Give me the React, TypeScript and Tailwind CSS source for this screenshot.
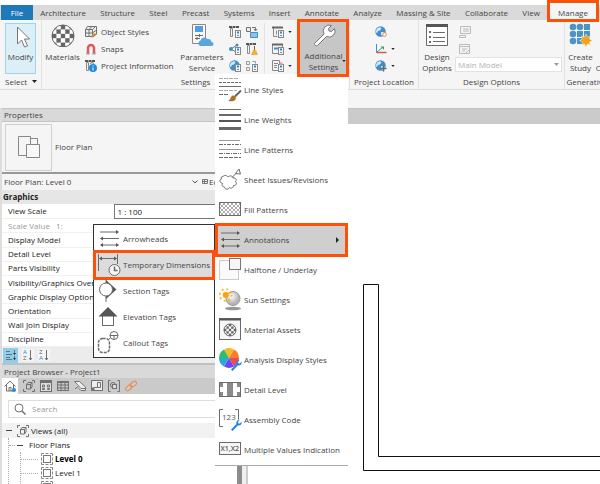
import React from 'react';

interface IconProps {
  children: React.ReactNode;
}

// 12px glyphs used in the small ribbon buttons and the browser toolbar
const Icon12: React.FC<IconProps> = ({ children }) => (
  <svg width="12" height="12" viewBox="0 0 12 12" fill="none" stroke="#707070" className="shrink-0" aria-hidden="true">
    {children}
  </svg>
);

// 24px glyphs used in the big ribbon buttons and the menus
const Icon24: React.FC<IconProps> = ({ children }) => (
  <svg width="24" height="24" viewBox="0 0 24 24" fill="none" stroke="#6b6b6b" className="shrink-0" aria-hidden="true">
    {children}
  </svg>
);

const Caret = ({ className }: { className: string }) => (
  <svg viewBox="0 0 5 3" className={`shrink-0 ${className}`} aria-hidden="true">
    <path d="M0 0h5L2.5 3z" fill="currentColor" />
  </svg>
);

// Orange frame that marks the controls of the current step
const Highlight = ({ className }: { className: string }) => (
  <span className={`pointer-events-none absolute border-3 border-[#ff5008] ${className}`} />
);

const CheckerBall = ({ cx, cy, r }: { cx: number; cy: number; r: number }) => {
  const s = (r * 2) / 5;
  const id = `ball-${r}`;
  const cells = [];
  for (let row = 0; row < 5; row++) {
    for (let col = 0; col < 5; col++) {
      if ((row + col) % 2 === 0) {
        cells.push(<rect key={`${row}-${col}`} x={cx - r + col * s} y={cy - r + row * s} width={s} height={s} />);
      }
    }
  }
  return (
    <g>
      <clipPath id={id}>
        <circle cx={cx} cy={cy} r={r} />
      </clipPath>
      <circle cx={cx} cy={cy} r={r} fill="#fff" stroke="none" />
      <g clipPath={`url(#${id})`} fill="#666" stroke="none">{cells}</g>
      <circle cx={cx} cy={cy} r={r} stroke="#666" />
    </g>
  );
};

const Wrench = () => (
  <g stroke="none" fill="#1e88e5">
    <path d="M13 21.5l5.5-5.500c-.8-2 .7-4.500 3.200-4.300l-1.700 2 .3 1.500 1.500.3 1.900-1.800c.6 2.500-1.700 4.400-3.900 3.700L14.500 23z" />
  </g>
);

const ArrowLines = () => (
  <g>
    <path d="M3 5h17M4 11.5h18M4 18h17" stroke="#6b6b6b" />
    <path d="M19 3l3 2-3 2zM6 9.500l-3 2 3 2zM6 16l-3 2 3 2zM19 16l3 2-3 2z" fill="#555" stroke="none" />
  </g>
);

const Globe = () => (
  <g stroke="none">
    <circle cx="5.5" cy="5.5" r="5.2" fill="#3f8fcb" />
    <path d="M2 2.500l3-1.500 1.500 1.500-1.500 2-2 .5-1 2-1.500-1zM6 6l3 0 1 2-2 2-2-1z" fill="#d3e6f3" />
  </g>
);

const menuItems = [
  {
    label: 'Line Styles',
    icon: (
      <>
        <path d="M1 .5h20M1 12.5h18" strokeDasharray="4 1" stroke="#aaa" />
        <path d="M1 4.5h22" strokeDasharray="3 1" />
        <path d="M1 8.5h22" />
        <path d="M1 16.5h10" strokeDasharray="4 1" />
        <path d="M23 12.500l-6 6" stroke="#666" strokeWidth="2" />
        <path d="M10 23c3-1 2-5 5-5.500 3 0 4 3 1.500 5-2 1-4 1-6.500.5z" fill="#a9712d" stroke="none" />
      </>
    ),
  },
  {
    label: 'Line Weights',
    icon: (
      <>
        <path d="M1 1.5h22" />
        <path d="M1 7h22" strokeWidth="2" />
        <path d="M1 13h22" strokeWidth="2" stroke="#555" />
        <path d="M1 20.5h22" strokeWidth="3" stroke="#666" />
      </>
    ),
  },
  {
    label: 'Line Patterns',
    icon: (
      <>
        <path d="M1 2.5h21M1 11.5h22" stroke="#999" />
        <path d="M1 6.5h22" strokeDasharray="4 1 2 1" />
        <path d="M1 15.5h22" strokeDasharray="4 1 1 1" />
        <path d="M1 19.5h22" strokeDasharray="4 1" />
      </>
    ),
  },
  {
    label: 'Sheet Issues/Revisions',
    icon: (
      <>
        <path d="M5 8.500c2-2 4-1 5 .5 2-2 5-1 5 1 3-.5 4 2 2.500 3.500 2 2 0 4.500-2 4 0 2.500-3 3.500-4 2-2 3-5 1.500-5-.5-2 0-3-2-2-3.500-3-1-3.500-4-1-4.500-1-1.500 0-2.500 1.500-2.500z" />
        <path d="M14 9.500l4-4M17.500 5.500l3.500-4.500 1.500 5z" />
      </>
    ),
  },
  {
    label: 'Fill Patterns',
    icon: (
      <>
        <defs>
          <pattern id="hatch" width="4" height="4" patternUnits="userSpaceOnUse">
            <path d="M0 0l4 4M4 0L0 4" stroke="#999" strokeWidth=".8" />
          </pattern>
        </defs>
        <rect x="1.5" y="4.5" width="21" height="13" fill="url(#hatch)" />
      </>
    ),
  },
  { label: 'Annotations', icon: <ArrowLines /> },
  {
    label: 'Halftone / Underlay',
    icon: (
      <>
        <rect x="1.5" y="2.5" width="19" height="19" fill="#fafafa" stroke="#ccc" />
        <rect x="11.5" y=".5" width="11" height="11" fill="#f5f5f5" stroke="#777" />
      </>
    ),
  },
  {
    label: 'Sun Settings',
    icon: (
      <>
        <defs>
          <radialGradient id="sphere" cx=".4" cy=".35">
            <stop offset="0" stopColor="#fff" />
            <stop offset="1" stopColor="#b5b5b5" />
          </radialGradient>
        </defs>
        <ellipse cx="15" cy="20.5" rx="8" ry="1.8" fill="#999" stroke="none" />
        <circle cx="15" cy="10.5" r="7" fill="url(#sphere)" stroke="#999" />
        <circle cx="7.7" cy="7" r="6" stroke="#fdb515" strokeWidth="1.8" strokeDasharray="1.8 2.9" />
        <circle cx="7.7" cy="7" r="3" fill="#fba40a" stroke="none" />
      </>
    ),
  },
  {
    label: 'Material Assets',
    icon: (
      <>
        <rect x="1.5" y=".5" width="21" height="21" fill="#f7f7f7" />
        <path d="M1 1.5h22" strokeWidth="2" stroke="#555" />
        <CheckerBall cx={12} cy={12} r={6} />
      </>
    ),
  },
  {
    label: 'Analysis Display Styles',
    icon: (
      <>
        <g stroke="none">
          <path d="M11 10L6 1.400A10 10 0 0 1 16 1.400z" fill="#fbb928" />
          <path d="M11 10L16 1.400A10 10 0 0 1 21 10z" fill="#fa7d2c" />
          <path d="M11 10H21A10 10 0 0 1 16 18.600z" fill="#ee4a55" />
          <path d="M11 10L16 18.600A10 10 0 0 1 6 18.600z" fill="#7044f0" />
          <path d="M11 10L6 18.600A10 10 0 0 1 1 10z" fill="#2aa8d8" />
          <path d="M11 10H1A10 10 0 0 1 6 1.400z" fill="#2ebd6b" />
        </g>
        <Wrench />
      </>
    ),
  },
  {
    label: 'Detail Level',
    icon: (
      <>
        <rect x="1.5" y="4.5" width="21" height="14" fill="#fff" />
        <path d="M2 5h3v4H2zM9 5h6v4H9zM19 5h3v4h-3zM5 9h4v5H5zM9 9h6v5H9zM15 9h4v5h-4zM2 14h3v4H2zM9 14h6v4H9zM19 14h3v4h-3z" fill="#8a8a8a" stroke="none" />
        <path d="M5 9h4v5H5zM15 9h4v5h-4z" fill="#fff" stroke="none" />
      </>
    ),
  },
  {
    label: 'Assembly Code',
    icon: (
      <>
        <path d="M5 1.500H1.500v17H5M17 1.500h3.500v10" />
        <text x="4" y="12" fontSize="8" fill="#555" stroke="none">123</text>
        <Wrench />
      </>
    ),
  },
  {
    label: 'Multiple Values Indication',
    icon: (
      <>
        <rect x="1.5" y="4.5" width="21" height="12" fill="#f7f7f7" />
        <text x="2.5" y="13" fontSize="7" fontWeight="600" fill="#555" stroke="none">X1,X2</text>
      </>
    ),
  },
];

const submenuItems = [
  { label: 'Arrowheads', icon: <ArrowLines /> },
  {
    label: 'Temporary Dimensions',
    icon: (
      <>
        <path d="M1.500 1v17M20.500 1v10M3 5.500h16" />
        <path d="M5 3.500l-3 2 3 2zM17 3.500l3 2-3 2z" fill="#555" stroke="none" />
        <circle cx="17.5" cy="17" r="5.5" fill="#f5f5f5" />
        <path d="M17.500 13.500v4h3" strokeWidth="1.5" />
      </>
    ),
  },
  {
    label: 'Section Tags',
    icon: (
      <>
        <path d="M9 1l10.500 9.500L9 20z" fill="#555" stroke="none" />
        <circle cx="9" cy="10.5" r="6.5" fill="#fff" />
        <path d="M9 0v4M9 17v6" />
      </>
    ),
  },
  {
    label: 'Elevation Tags',
    icon: (
      <>
        <rect x="5.5" y="9.5" width="11" height="11" fill="#fff" />
        <path d="M11 2l9.500 9.500H1.500z" fill="#555" stroke="none" />
      </>
    ),
  },
  {
    label: 'Callout Tags',
    icon: (
      <>
        <rect x="1.5" y="7.5" width="11" height="14" rx="4" strokeDasharray="3 1" strokeWidth="1.5" />
        <circle cx="17" cy="4.5" r="4" />
        <path d="M13 4.500h8M17 4.500v4M13 7l-2 2" />
      </>
    ),
  },
];

const properties = [
  ['View Scale', '1 : 100'],
  ['Scale Value   1:', '100'],
  ['Display Model', ''],
  ['Detail Level', ''],
  ['Parts Visibility', ''],
  ['Visibility/Graphics Over', ''],
  ['Graphic Display Option', ''],
  ['Orientation', ''],
  ['Wall Join Display', ''],
  ['Discipline', ''],
];

const tabs = [
  'Architecture',
  'Structure',
  'Steel',
  'Precast',
  'Systems',
  'Insert',
  'Annotate',
  'Analyze',
  'Massing & Site',
  'Collaborate',
  'View',
];

const ViewIcon = () => (
  <Icon12>
    <path d="M.5 3V.5H3M9 .5h2.500V3M11.500 9v2.500H9M3 11.500H.5V9" />
    <path d="M3.500 4.500h4v4.500h-4zM3.500 4.500L5 2.500h4L7.500 4.500M9 2.500V7L7.500 9" />
  </Icon12>
);

const LevelIcon = () => (
  <Icon12>
    <rect x="2.5" y="2.5" width="7" height="7" fill="#fff" stroke="#777" />
    <path d="M.5 3V.5H3M4.500.5h3M9 .5h2.500V3M11.500 4.500v3M11.500 9v2.500H9M7.500 11.500h-3M3 11.500H.5V9M.5 7.500v-3" stroke="#888" />
  </Icon12>
);

const browserTabs = [
  { label: 'Views', icon: <ViewIcon /> },
  {
    label: 'Legends',
    icon: (
      <Icon12>
        <rect x=".5" y=".5" width="11" height="11" fill="#ddd" />
        <path d="M1 2h10" strokeWidth="2" />
        <path d="M2.500 5h2v2h-2zM7.500 5h2v2h-2zM2.500 8.500h2v1h-2zM7.500 8.500h2v1h-2z" />
      </Icon12>
    ),
  },
  {
    label: 'Schedules',
    icon: (
      <Icon12>
        <path d="M.5 1.500h11v9H.5zM.5 5h11M.5 8h11M4 2v8M8 2v8" />
        <path d="M.5 2h11" strokeWidth="2" />
      </Icon12>
    ),
  },
  {
    label: 'Sheets',
    icon: (
      <Icon12>
        <path d="M.5 1.500h5l6 5.500v3.500H7L4 7.500" fill="#eee" />
        <path d="M.5 1.500L7 8.500h4M1 9l3.500-3" />
      </Icon12>
    ),
  },
  {
    label: 'Families',
    icon: (
      <Icon12>
        <path d="M.5.5h11v10H.5z" fill="#eee" />
        <path d="M3 7.500h3.500v-5M6.500 2.500h3v5h-3" />
        <path d="M1 8h2v2H1z" fill="#777" />
      </Icon12>
    ),
  },
  {
    label: 'Groups',
    icon: (
      <Icon12>
        <path d="M2.500.5H.5v11h2M9.500.5h2v11h-2" />
        <circle cx="5" cy="5" r="2.5" />
        <rect x="4.5" y="4.5" width="4" height="4" fill="#ddd" />
      </Icon12>
    ),
  },
  {
    label: 'Links',
    icon: (
      <Icon12>
        <g stroke="#f0894d" transform="rotate(-40 6 6)">
          <rect x="-.5" y="4" width="7" height="4" rx="2" />
          <rect x="5.500" y="4" width="7" height="4" rx="2" />
        </g>
      </Icon12>
    ),
  },
];

const RibbonPanel = ({ label, className, children }: { label: string; className: string; children: React.ReactNode }) => (
  <section className={`flex shrink-0 flex-col border-r border-[#e2e2e2] ${className}`}>
    <div className="flex h-[54px] pt-[3px]">{children}</div>
    <div className="h-[15px] text-center leading-[15px] whitespace-nowrap">{label}</div>
  </section>
);

const BigButton = ({ icon, lines, className }: { icon: React.ReactNode; lines: string[]; className: string }) => (
  <button className={`flex shrink-0 flex-col items-center ${className}`}>
    <Icon24>{icon}</Icon24>
    <span className="mt-1 block leading-[11px] whitespace-nowrap">
      {lines.map(line => (
        <span key={line} className="block">{line}</span>
      ))}
    </span>
  </button>
);

const SmallButton = ({ label, caret, children }: { label: string; caret?: boolean; children: React.ReactNode }) => (
  <button aria-label={label} className="flex h-[17px] items-center gap-1">
    <Icon12>{children}</Icon12>
    {caret && <Caret className="h-[2px] w-1 text-[#222]" />}
  </button>
);

// Small calculator shape shared by the settings buttons
const Calc = () => (
  <g>
    <rect x="6.500" y="4.500" width="5" height="7" fill="#f5f5f5" stroke="#888" />
    <path d="M8 6.500h2" stroke="#1e88e5" strokeWidth="2" />
    <path d="M8 9.500h2" stroke="#888" />
  </g>
);

// Column with a hatched cap, the "parameter" part of a glyph
const Column = () => (
  <g>
    <path d="M1.500 2.500h2v8h-2z" fill="#f5f5f5" stroke="#888" />
    <path d="M0 1h10" stroke="#555" strokeWidth="2" strokeDasharray="3 .5" />
  </g>
);

const MainMenu = () => (
  <div role="menu" className="absolute top-full right-0 w-[133px] border-b border-[#aaa] bg-white pt-px">
    {menuItems.map(item => (
      <button
        key={item.label}
        role="menuitem"
        className={`relative flex h-[30px] w-full items-center gap-[2px] pl-[3px] whitespace-nowrap ${item.label === 'Annotations' ? 'bg-[#cfcfcf]' : ''}`}
      >
        <Icon24>{item.icon}</Icon24>
        {item.label}
        {item.label === 'Annotations' && (
          <>
            <svg width="3" height="6" viewBox="0 0 3 6" className="mr-[9px] ml-auto" aria-hidden="true">
              <path d="M0 0l3 3-3 3z" fill="#222" />
            </svg>
            <Highlight className="-inset-y-[2px] inset-x-0" />
          </>
        )}
      </button>
    ))}
    <div role="menu" className="absolute top-[150px] right-full w-[122px] border border-[#333] bg-white py-px">
      {submenuItems.map(item => (
        <button
          key={item.label}
          role="menuitem"
          className={`relative flex h-[26px] w-full items-center gap-[2px] pl-[3px] whitespace-nowrap ${item.label === 'Temporary Dimensions' ? 'bg-[#dcdcdc]' : ''}`}
        >
          <Icon24>{item.icon}</Icon24>
          {item.label}
          {item.label === 'Temporary Dimensions' && <Highlight className="-inset-y-[2px] -inset-x-px" />}
        </button>
      ))}
    </div>
  </div>
);

const Ribbon = () => (
  <div className="flex h-[70px] shrink-0 border-b border-[#dedede] bg-[#f5f5f5]">
    <section className="w-[42px] shrink-0 border-r border-[#e2e2e2] pt-[3px] pl-[5px]">
      <button className="flex h-[51px] w-[31px] flex-col items-center border border-[#9ed3ea] bg-[#dceef6] pt-px">
        <Icon24>
          <path d="M8.500 2v17l4-4 3 7 3-1-3-7h5z" fill="#fff" stroke="#777" />
        </Icon24>
        <span className="mt-[2px] leading-[11px]">Modify</span>
      </button>
      <button className="flex h-[15px] items-center gap-[5px]">
        Select
        <Caret className="h-[3px] w-[5px] text-[#222]" />
      </button>
    </section>

    <RibbonPanel label="Settings" className="w-[308px]">
      <BigButton className="w-[41px]" lines={['Materials']} icon={<CheckerBall cx={12} cy={13} r={11} />} />
      <div className="flex w-[98px] flex-col pl-[2px]">
        <button className="flex h-[17px] items-center gap-1 whitespace-nowrap">
          <Icon12>
            <path d="M.5 3.500h7v7h-7zM.5 3.500l2-3h9v8M4 3.500v7M.5 7h7M7.500 3.500l3-3M4 3.500l3-3M7.500 7l4-3" fill="#eee" />
            <path d="M6 11.500l1-3 3-1.500 1.500 1.500-2.500 2.500z" fill="#c58a3c" stroke="none" />
          </Icon12>
          Object Styles
        </button>
        <button className="flex h-[17px] items-center gap-1 whitespace-nowrap">
          <Icon12>
            <path d="M3 11V5a3 3 0 0 1 6 0v6" stroke="#dc5a5a" strokeWidth="2.5" />
            <path d="M1.500 10.500h3M7.500 10.500h3" stroke="#999" strokeWidth="2" />
          </Icon12>
          Snaps
        </button>
        <button className="flex h-[17px] items-center gap-1 whitespace-nowrap">
          <Icon12>
            <Column />
            <path d="M5 3.500l2-1 2 1" />
            <circle cx="8" cy="8" r="4" fill="#1e88e5" stroke="none" />
            <path d="M8 7.500v3M8 5.500v1" stroke="#fff" />
          </Icon12>
          Project Information
        </button>
      </div>
      <BigButton
        className="w-[42px]"
        lines={['Parameters', 'Service']}
        icon={
          <>
            <path d="M2.500 1.500h13v19h-13z" fill="#f8f8f8" stroke="#888" />
            <path d="M5 3h8v6H5z" fill="#4f9fe0" stroke="none" />
            <path d="M5 12.500h8M5 15.500h5M9.500 11v3M7 14v3" />
            <path d="M10 23a3 3 0 0 1 .5-5.500 4 4 0 0 1 7-1.500 3.500 3.500 0 0 1 4 3 2 2 0 0 1 0 4z" fill="#5aa5de" stroke="none" />
          </>
        }
      />
      <div className="flex w-[41px] gap-[5px] pl-[6px]">
        <div className="flex flex-col">
          <SmallButton label="Project Parameters">
            <Column />
            <Calc />
          </SmallButton>
          <SmallButton label="Shared Parameters">
            <path d="M2 6l6-4M2 6l5 3" />
            <circle cx="2" cy="6" r="2" fill="#3f8fcb" stroke="none" />
            <circle cx="8" cy="2" r="1.5" fill="#3f8fcb" stroke="none" />
            <Calc />
          </SmallButton>
          <SmallButton label="Global Parameters">
            <Globe />
            <Calc />
          </SmallButton>
        </div>
        <div className="flex flex-col">
          <SmallButton label="Transfer Project Standards">
            <path d="M.5 1.500h4v4h-4z" fill="#eee" />
            <path d="M6 1.500h3.500V4M8 3l1.500 2L11 3" />
            <path d="M4.500 6.500h7v5h-7z" fill="#8cc3ea" stroke="#3f8fcb" />
          </SmallButton>
          <SmallButton label="Purge Unused">
            <Column />
            <path d="M8.500 3v4" stroke="#8a5a2a" />
            <path d="M7 7h3l2 5H5z" fill="#f0b040" stroke="none" />
          </SmallButton>
          <SmallButton label="Project Units">
            <path d="M.5 1.500h3v3h-3zM6.500 1.500h3v2M.5 7.500h3v3h-3z" stroke="#999" />
            <Calc />
          </SmallButton>
        </div>
      </div>
      <div className="flex w-[34px] flex-col border-l border-[#e2e2e2] pl-[7px]">
        <SmallButton label="Structural Settings" caret>
          <path d="M1.500 2v8.500h4M4.500 4.500v4" stroke="#888" />
          <path d="M0 1.500h11" stroke="#666" strokeWidth="2" />
          <Calc />
        </SmallButton>
        <SmallButton label="MEP Settings" caret>
          <path d="M.5 1.500h10v9H.5z" stroke="#888" />
          <path d="M0 1.500h11" stroke="#666" strokeWidth="2" />
          <path d="M2 5.500h4" stroke="#3f8fcb" strokeWidth="2" />
          <Calc />
        </SmallButton>
        <SmallButton label="Panel Schedule Templates" caret>
          <path d="M.5.5h7v10h-7zM2 3.500h4M2 5.500h3M2 7.500h3" stroke="#888" />
          <Calc />
          <circle cx="9" cy="3.5" r="1.5" fill="#e8a0a8" stroke="none" />
        </SmallButton>
      </div>
      <div className="relative -mt-px h-[52px] w-[50px] shrink-0 pl-px">
        <button className="flex h-full w-full flex-col items-center bg-[#c6c6c6] pt-px">
          <Icon24>
            <path d="M2.500 20.500L12 11a6 6 0 0 1 7.500-8.500l-3 3 .5 2.500 2.500.5 3-3A6 6 0 0 1 14.500 13.500L5.500 22.500a2 2 0 0 1-3-2z" fill="#fff" stroke="#777" />
          </Icon24>
          <span className="mt-[3px] block leading-[11px]">
            <span className="block">Additional</span>
            <span className="block">Settings</span>
          </span>
        </button>
        <Caret className="absolute right-[2px] bottom-[12px] h-[2px] w-1 text-[#222]" />
        <MainMenu />
        <Highlight className="-inset-y-[3px] -inset-x-px" />
      </div>
    </RibbonPanel>

    <RibbonPanel label="Project Location" className="w-[69px]">
      <div className="flex flex-col pl-[25px]">
        <SmallButton label="Location">
          <Globe />
          <circle cx="9.500" cy="8.500" r="1.800" stroke="#e8823a" fill="#fff" />
        </SmallButton>
        <SmallButton label="Coordinates" caret>
          <path d="M1.500 1v8.500" stroke="#3f8fcb" />
          <path d="M1.500 9.500h10" stroke="#d9534f" strokeWidth="1.5" />
          <path d="M2 9l6-5" stroke="#3aa86a" />
          <path d="M5.500 3.500H9V7z" fill="#3aa86a" stroke="none" />
        </SmallButton>
        <SmallButton label="Position" caret>
          <Globe />
          <path d="M8.500 5.500v6M5.500 8.500h6" stroke="#666" strokeWidth="1.5" />
        </SmallButton>
      </div>
    </RibbonPanel>

    <RibbonPanel label="Design Options" className="w-[146px]">
      <BigButton
        className="w-[36px]"
        lines={['Design', 'Options']}
        icon={
          <>
            <path d="M1.500 1.500h21v21h-21z" fill="#fff" />
            <path d="M1 2.500h22" strokeWidth="3" stroke="#555" />
            <path d="M4 9h2M4 14h2M4 19h2" strokeWidth="2" />
            <path d="M8 9.500h12M8 14.500h12M8 18.500h12" />
          </>
        }
      />
      <div className="flex min-w-0 flex-1 flex-col pr-[2px]">
        <div className="flex flex-col pl-1">
          <SmallButton label="Add to Set">
            <path d="M1.500.5h10v7h-10zM4 3h6M4 5h6M.5 9.500h6v2h-6z" stroke="#bbb" />
          </SmallButton>
          <SmallButton label="Pick to Edit">
            <path d="M.5 1.500h10v9H.5zM.5 3.500h10M3 6h5M3 8h3M7 10l4-4" stroke="#bbb" />
          </SmallButton>
        </div>
        <div className="relative">
          <select aria-label="Active design option" disabled className="block h-[15px] w-full appearance-none border border-[#e2e2e2] bg-white px-[2px] text-[8px] text-[#b0b0b0] opacity-100">
            <option>Main Model</option>
          </select>
          <Caret className="absolute top-[6px] right-[3px] h-[3px] w-[5px] text-[#999]" />
        </div>
      </div>
    </RibbonPanel>

    <RibbonPanel label="Generative Design" className="w-[72px]">
      <BigButton
        className="w-[31px]"
        lines={['Create', 'Study']}
        icon={
          <>
            <g fill="#4d93c4" stroke="none">
              <circle cx="4" cy="4" r="3.3" />
              <circle cx="11" cy="4" r="3.3" />
              <rect x="15" y="1" width="6" height="6" />
              <circle cx="4" cy="11" r="3.3" />
              <rect x="8" y="8" width="6" height="6" />
              <rect x="15" y="8" width="6" height="6" />
              <circle cx="4" cy="18" r="3.3" />
              <rect x="8" y="15" width="6" height="6" />
            </g>
            <path d="M17 11l1.500 3 3-1-1 3 3 1.500-3 1.500 1 3-3-1-1.500 3-1.500-3-3 1 1-3-3-1.500 3-1.500-1-3 3 1z" fill="#f5a21b" stroke="#f5f5f5" strokeWidth=".5" />
          </>
        }
      />
      <BigButton className="w-[38px]" lines={['Explore', 'Outcomes']} icon={<path d="M8 2h14v20H8z" />} />
    </RibbonPanel>
  </div>
);

const PropertiesPalette = () => (
  <section className="shrink-0">
    <h2 className="h-[14px] border-y border-[#c4c4c4] bg-[#d9d9d9] pl-[2px] leading-[12px]">Properties</h2>
    <div className="flex h-[52px] items-center gap-[3px] border-b-2 border-[#999] pl-[3px]">
      <div className="flex size-[47px] items-center justify-center border border-[#d0d0d0]">
        <svg width="24" height="24" viewBox="0 0 24 24" fill="none" stroke="#888" aria-hidden="true">
          <path d="M13.500 1.500h-12v19h8M13.500 3.500h7v6M13.500 1.500v8" />
          <path d="M9.500 9.500h13v13h-13z" fill="#f8f8f8" />
        </svg>
      </div>
      Floor Plan
    </div>
    <div className="flex h-[16px] items-center pr-[10px] pl-[2px]">
      Floor Plan: Level 0
      <svg width="6" height="4" viewBox="0 0 6 4" fill="none" stroke="#555" className="mr-1 ml-auto" aria-hidden="true">
        <path d="M.5.5L3 3 5.500.5" />
      </svg>
      <button className="flex w-[25px] items-center gap-[1px] overflow-hidden whitespace-nowrap">
        <svg width="6" height="6" viewBox="0 0 6 6" fill="none" stroke="#777" className="shrink-0" aria-hidden="true">
          <path d="M.5.5h5v4h-5zM2.500.5v4M.5 2.500h5" />
        </svg>
        Edit
      </button>
    </div>
    <h3 className="h-[14px] bg-[#e6e6e6] pl-px leading-[14px] font-bold text-[#222]">Graphics</h3>
    <table className="h-[143px] w-full table-fixed border-collapse bg-white">
      <tbody>
        {properties.map(([name, value], i) => (
          <tr key={name} className={`border-b border-[#f0f0f0] ${i === 1 ? 'text-[#999]' : 'text-[#222]'}`}>
            <th scope="row" className="w-[112px] p-0 pl-[6px] text-left leading-[12px] font-normal whitespace-pre">{name}</th>
            <td className={`p-0 leading-[12px] whitespace-nowrap ${i === 0 ? 'border border-[#777] pl-[3px]' : 'pl-[2px]'}`}>{value}</td>
          </tr>
        ))}
      </tbody>
    </table>
    <div className="flex h-4 items-center gap-1 bg-[#ececec] px-px">
      <button aria-label="Group by category" className="flex h-[15px] w-[15px] items-center justify-center bg-[#8fcdec]">
        <Icon12>
          <path d="M1 2.500h4M1 5.500h6M1 8.500h4M1 10.500h6M9.500 1v4M9.500 7v4" />
          <path d="M8 4l1.500 2L11 4zM8 9l1.500 2L11 9z" fill="#333" stroke="none" />
        </Icon12>
      </button>
      <button aria-label="Sort ascending" className="bg-[#f5f5f5]">
        <Icon12>
          <text x="1" y="5" fontSize="6" fill="#1e88e5" stroke="none">A</text>
          <text x="1" y="11" fontSize="6" fill="#555" stroke="none">Z</text>
          <path d="M8.500 1v10M7 9l1.500 2L10 9" />
        </Icon12>
      </button>
      <button aria-label="Sort descending" className="bg-[#f5f5f5]">
        <Icon12>
          <text x="1" y="5" fontSize="6" fill="#555" stroke="none">Z</text>
          <text x="1" y="11" fontSize="6" fill="#1e88e5" stroke="none">A</text>
          <path d="M8.500 1v10M7 9l1.500 2L10 9" />
        </Icon12>
      </button>
    </div>
  </section>
);

const ProjectBrowser = () => (
  <section className="flex min-h-0 flex-1 flex-col overflow-hidden bg-white">
    <h2 className="h-[15px] shrink-0 border-t-2 border-[#c0c0c0] bg-[#d9d9d9] pl-[2px] leading-[13px]">Project Browser - Project1</h2>
    <div className="flex h-4 shrink-0 items-center gap-[5px] bg-[#cacaca]">
      <button aria-label="Home" className="flex h-full w-4 items-center justify-center bg-white">
        <Icon12>
          <path d="M.5 6.500L6 1l5.500 5.500M2.500 5v6h7V5M5 11V7.500h2V11" />
          <circle cx="10" cy="10" r="2" fill="#1e88e5" stroke="none" />
        </Icon12>
      </button>
      {browserTabs.map(tab => (
        <button key={tab.label} aria-label={tab.label}>{tab.icon}</button>
      ))}
    </div>
    <label className="mt-[6px] ml-[6px] flex h-[18px] shrink-0 items-center gap-[6px] border border-[#ddd] pl-[5px]">
      <Icon12>
        <circle cx="5" cy="5" r="4" />
        <path d="M8 8l3.500 3.500" strokeWidth="1.5" />
      </Icon12>
      <input aria-label="Search project browser" placeholder="Search" className="w-full bg-transparent placeholder:text-[#999]" />
    </label>
    <ul className="mt-[5px] text-[#222]">
      <li>
        <div className="flex h-[15px] items-center gap-[5px] bg-[#f2f2f2] pl-1">
          <span className="h-px w-[6px] bg-[#444]" />
          <span className="flex items-center gap-[2px]"><ViewIcon />Views (all)</span>
        </div>
        <ul className="ml-[6px] border-l border-dotted border-[#aaa]">
          <li>
            <div className="flex h-[14px] items-center gap-[6px]">
              <span className="-mr-1 w-[6px] border-t border-dotted border-[#aaa]" />
              <span className="h-px w-[6px] bg-[#444]" />
              Floor Plans
            </div>
            <ul className="ml-[11px] border-l border-dotted border-[#aaa]">
              {['Level 0', 'Level 1', 'Level 2'].map((level, i) => (
                <li key={level} className={`flex h-[14px] items-center gap-[2px] ${i === 0 ? 'font-bold text-black' : ''}`}>
                  <span className="mr-px w-[17px] border-t border-dotted border-[#aaa]" />
                  <LevelIcon />
                  {level}
                </li>
              ))}
            </ul>
          </li>
        </ul>
      </li>
    </ul>
  </section>
);

const App: React.FC = () => {
  return (
    <div className="flex h-screen flex-col overflow-hidden bg-white font-['Open_Sans','Noto_Sans',sans-serif] text-[8px] text-[#444]">
      <nav className="relative mt-[5px] flex h-[15px] shrink-0 items-stretch bg-[#dadada] px-px whitespace-nowrap">
        <button className="w-8 shrink-0 bg-[#1f78b8] text-white">File</button>
        {tabs.map(tab => (
          <button key={tab} className="shrink-0 grow px-[7px]">{tab}</button>
        ))}
        <button className="relative w-[52px] shrink-0 bg-[#f5f5f5]">
          Manage
          <Highlight className="-top-[5px] -bottom-[2px] inset-x-0 z-10" />
        </button>
      </nav>
      <Ribbon />
      <div className="h-[18px] shrink-0 bg-[#f5f5f5]" />

      <main className="flex min-h-0 flex-1">
        <aside className="flex w-[237px] shrink-0 flex-col border-l-2 border-[#ddd] bg-[#f5f5f5]">
          <PropertiesPalette />
          <ProjectBrowser />
        </aside>
        <div className="w-[5px] shrink-0 bg-[#8c8c8c]" />
        <div className="w-[6px] shrink-0 border-r-2 border-[#ccc] bg-[#efefef]" />
        <div className="flex min-w-0 flex-1 flex-col">
          <div className="h-4 shrink-0 border-t border-[#c0c0c0] bg-[#cbcbcb]" />
          <svg className="min-h-0 w-full flex-1" fill="none" stroke="#111" aria-label="Wall in the Level 0 floor plan">
            <path d="M9999 346.500H115.500V160.500H130.500V332.500H9999" />
          </svg>
        </div>
      </main>
    </div>
  );
};

export default App;
